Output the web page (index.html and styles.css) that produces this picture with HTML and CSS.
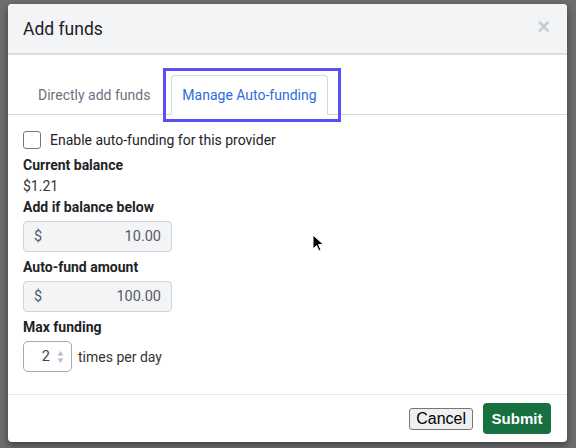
FILE: index.html
```html
<!DOCTYPE html>
<html lang="en">
<head>
    <meta charset="UTF-8">
    <meta name="viewport" content="width=device-width, initial-scale=1.0">
    <link rel="stylesheet" href="styles.css">
</head>
<body>

    <div class="modal">
        <div class="modal-header">
            <h2>Add funds</h2>
            <span class="close">&times;</span>
        </div>

        <div class="tabs">
            <div class="tab">Directly add funds</div>
            <div class="tab active">Manage Auto-funding</div>
        </div>

        <div class="modal-body">
            <label class="check-row">
                <span class="checkbox"></span>
                Enable auto-funding for this provider
            </label>

            <div class="field-label">Current balance</div>
            <div class="balance">$1.21</div>

            <div class="field-label">Add if balance below</div>
            <div class="money-input"><span>$</span><span>10.00</span></div>

            <div class="field-label spaced">Auto-fund amount</div>
            <div class="money-input"><span>$</span><span>100.00</span></div>

            <div class="field-label spaced">Max funding</div>
            <div class="times-row">
                <div class="number-input">
                    <span>2</span>
                    <svg class="spinner" width="7" height="14" viewBox="0 0 7 14">
                        <path d="M3.5 1 L6.5 5.5 L0.5 5.5 Z" fill="#b9bec6"/>
                        <path d="M3.5 13 L6.5 8.5 L0.5 8.5 Z" fill="#b9bec6"/>
                    </svg>
                </div>
                times per day
            </div>
        </div>

        <div class="modal-footer">
            <button class="cancel">Cancel</button>
            <button class="submit">Submit</button>
        </div>
    </div>

    <!-- mouse pointer -->
    <svg class="pointer" width="13" height="19" viewBox="0 0 13 19">
        <path d="M1 1 L1 15 L4.5 11.5 L7 17 L9 16 L6.6 10.6 L11.5 10.6 Z" fill="#000" stroke="#fff" stroke-width="1"/>
    </svg>

</body>
</html>
```
FILE: styles.css
```css
body {
    margin: 0;
    padding: 4px 9px 6px 8px;
    background-color: #6e6e6e; /* dimmed page behind the dialog */
    font-family: Roboto, "Liberation Sans", sans-serif;
    color: #1f2328;
}

.modal {
    background-color: #fff;
    border-radius: 4px;
    height: 438px;
    display: flex;
    flex-direction: column;
    box-shadow: 0 3px 8px rgba(0, 0, 0, 0.45);
    overflow: hidden;
}

.modal-header {
    height: 49px;
    background-color: #f3f4f6;
    border-bottom: 2px solid #dcdcdc;
    display: flex;
    align-items: center;
    justify-content: space-between;
    padding: 0 17px 0 15px;
}

.modal-header h2 {
    margin: 0;
    font-size: 17.5px;
    font-weight: 400;
    color: #202124;
}

.close {
    color: #c6ccd4;
    font-size: 22px;
    font-weight: bold;
    font-family: "Liberation Sans", sans-serif;
    margin-top: -4px;
}

.tabs {
    display: flex;
    align-items: flex-end;
    gap: 10px;
    padding: 20px 0 0 19px;
    border-bottom: 1px solid #d3d8de;
}

.tab {
    font-size: 14px;
    line-height: 18px;
    padding: 10px 11px;
    color: #6b7280;
}

.tab.active {
    position: relative;
    padding: 10px;
    color: #2f6ce0;
    border: 1px solid #d3d8de;
    border-bottom: 1px solid #fff;
    border-radius: 4px 4px 0 0;
    margin-bottom: -1px;
}

/* keyboard focus ring round the selected tab */
.tab.active::after {
    content: "";
    position: absolute;
    left: -9px;
    right: -14px;
    top: -8px;
    bottom: -8px;
    border: 3px solid #5b4ff3;
}

.modal-body {
    flex: 1;
    padding: 16px 15px 0;
    font-size: 14px;
}

.check-row {
    display: flex;
    align-items: center;
    gap: 9px;
    height: 18px;
    line-height: 18px;
    margin-bottom: 6px;
}

.checkbox {
    width: 16px;
    height: 16px;
    border: 1px solid #6f7680;
    border-radius: 3px;
}

.field-label {
    font-weight: bold;
    font-size: 14px;
    line-height: 21px;
    color: #1f2328;
}

.field-label.spaced {
    margin-top: 5px;
}

.balance {
    line-height: 21px;
    color: #333;
}

.money-input {
    margin-top: 3px;
    width: 127px;
    height: 29px;
    padding: 0 10px;
    display: flex;
    align-items: center;
    justify-content: space-between;
    background-color: #f3f4f6;
    border: 1px solid #cfd4da;
    border-radius: 4px;
    color: #555b63;
    font-size: 14.5px;
}

.times-row {
    margin-top: 3px;
    display: flex;
    align-items: center;
    gap: 6px;
    color: #333;
}

.number-input {
    width: 47px;
    height: 29px;
    border: 1px solid #a4abb4;
    border-radius: 5px;
    display: flex;
    align-items: center;
    justify-content: flex-end;
    gap: 7px;
}

.number-input span {
    color: #444;
    font-size: 14.5px;
}

.spinner {
    margin-right: 7px;
}

.modal-footer {
    height: 47px;
    border-top: 1px solid #e3e6ea;
    display: flex;
    align-items: center;
    justify-content: flex-end;
    gap: 10px;
    padding-right: 16px;
}

button {
    cursor: pointer;
}

.cancel {
    font-family: "Liberation Sans", Arial, sans-serif;
    font-size: 16px;
    height: 22px;
    padding: 0 6px;
    background-color: #efefef;
    border: 1px solid #767676;
    border-radius: 3px;
    color: #000;
}

.submit {
    font-family: "Liberation Sans", Arial, sans-serif;
    font-size: 15px;
    font-weight: bold;
    height: 31px;
    width: 68px;
    background-color: #16703f;
    color: #fff;
    border: none;
    border-radius: 4px;
}

.pointer {
    position: absolute;
    left: 312px;
    top: 234px;
}
```
